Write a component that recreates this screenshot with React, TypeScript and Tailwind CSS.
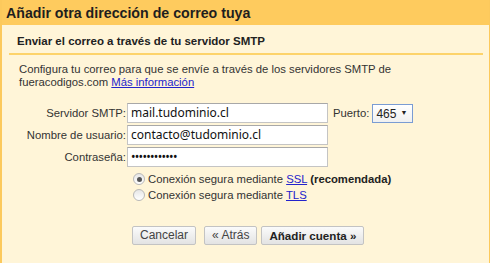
const labelCls = 'w-[125px] shrink-0 text-right pr-[1px] text-[11.3px] leading-[20px] text-[#333]';
const inputCls =
  'w-[201px] h-[20px] bg-white border border-[#c4c4c4] border-t-[#a8a8a8] px-[3px] text-[12px] leading-[18px] text-[#111] font-["Noto_Sans",sans-serif]';

const Radio = ({ checked }: { checked?: boolean }) => (
  <span className="w-[12px] h-[12px] rounded-full border border-[#b8b8b8] bg-gradient-to-b from-[#e6e6e6] to-[#ffffff] flex items-center justify-center shrink-0">
    {checked && <span className="w-[5px] h-[5px] rounded-full bg-[#555]" />}
  </span>
);

const Btn = ({ children, bold }: { children: React.ReactNode; bold?: boolean }) => (
  <button
    className={`h-[19px] px-[7px] border border-[#c3c3c3] rounded-[2px] bg-gradient-to-b from-[#fbfbfb] to-[#e3e3e3] leading-[17px] ${
      bold ? 'text-[11.6px] font-bold text-[#222]' : 'text-[12px] text-[#444]'
    }`}
  >
    {children}
  </button>
);

export default function App() {
  return (
    <div className="w-[490px] h-[263px] overflow-hidden bg-[#fff5d8] border-l-2 border-r border-[#fcc95c] font-['Liberation_Sans',Arial,sans-serif] text-[#222]">
      <div className="h-[25px] bg-[#fecb5e] pl-[4px] text-[14.2px] font-bold leading-[27px] text-[#1e1e1e]">
        Añadir otra dirección de correo tuya
      </div>

      <div className="mx-[7px] mr-[6px] pl-[8px] pt-[9px] pb-[5px] border-b-2 border-[#fdd36a] text-[11.5px] font-bold leading-[14px]">
        Enviar el correo a través de tu servidor SMTP
      </div>

      <div className="pl-[17px] pt-[8px] text-[11.3px] leading-[13px] text-[#333]">
        Configura tu correo para que se envíe a través de los servidores SMTP de
        <br />
        fueracodigos.com{' '}
        <a className="text-[#2323cc] underline" href="#">
          Más información
        </a>
      </div>

      <div className="mt-[14px] flex flex-col gap-[2px]">
        <div className="flex items-start">
          <span className={labelCls}>Servidor SMTP:</span>
          <div className={inputCls}>mail.tudominio.cl</div>
          <span className="ml-[5px] text-[11.3px] leading-[20px] text-[#333]">Puerto:</span>
          <div className="ml-[3px] mt-[1px] h-[19px] w-[41px] border border-[#7a9cd3] bg-gradient-to-b from-white to-[#f0f0f0] flex items-center pl-[3px] gap-[4px] text-[12px] text-[#222]">
            465 <span className="text-[7px]">▼</span>
          </div>
        </div>
        <div className="flex items-start">
          <span className={labelCls}>Nombre de usuario:</span>
          <div className={inputCls}>contacto@tudominio.cl</div>
        </div>
        <div className="flex items-start">
          <span className={labelCls}>Contraseña:</span>
          <div className={`${inputCls} text-[9px] tracking-[-0.7px]`}>••••••••••••</div>
        </div>
      </div>

      <div className="ml-[131px] mt-[5px] flex flex-col gap-[2px] text-[11.3px] text-[#333]">
        <label className="flex items-center gap-[3px] h-[14px]">
          <Radio checked />
          <span>
            Conexión segura mediante{' '}
            <a className="text-[#2323cc] underline" href="#">SSL</a>{' '}
            <b className="text-[#222]">(recomendada)</b>
          </span>
        </label>
        <label className="flex items-center gap-[3px] h-[14px]">
          <Radio />
          <span>
            Conexión segura mediante{' '}
            <a className="text-[#2323cc] underline" href="#">TLS</a>
          </span>
        </label>
      </div>

      <div className="ml-[130px] mt-[24px] flex gap-[8px]">
        <Btn>Cancelar</Btn>
        <div className="flex gap-[4px]">
          <Btn>« Atrás</Btn>
          <Btn bold>Añadir cuenta »</Btn>
        </div>
      </div>
    </div>
  );
}
